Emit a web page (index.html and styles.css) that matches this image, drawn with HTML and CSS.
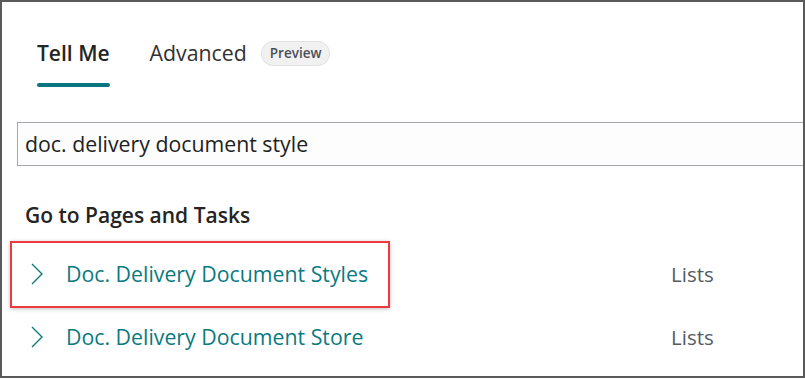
FILE: index.html
```html
<!DOCTYPE html>
<html lang="en">
<head>
    <meta charset="UTF-8">
    <meta name="viewport" content="width=device-width, initial-scale=1.0">
    <title>Tell Me</title>
    <link rel="stylesheet" href="styles.css">
</head>
<body>
    <div class="frame">
        <div class="tabs">
            <div class="tab active">Tell Me</div>
            <div class="tab">Advanced <span class="badge">Preview</span></div>
        </div>

        <div class="search">doc. delivery document style</div>

        <h2 class="section-title">Go to Pages and Tasks</h2>

        <ul class="results">
            <li class="result">
                <span class="highlight"></span>
                <svg class="chevron" width="14" height="22" viewBox="0 0 14 22">
                    <path d="M2 1 L12 11 L2 21" fill="none" stroke="#0b7a7f" stroke-width="1.4"/>
                </svg>
                <span class="result-name">Doc. Delivery Document Styles</span>
                <span class="result-type">Lists</span>
            </li>
            <li class="result">
                <svg class="chevron" width="14" height="22" viewBox="0 0 14 22">
                    <path d="M2 1 L12 11 L2 21" fill="none" stroke="#0b7a7f" stroke-width="1.4"/>
                </svg>
                <span class="result-name">Doc. Delivery Document Store</span>
                <span class="result-type">Lists</span>
            </li>
        </ul>
    </div>
</body>
</html>
```

FILE: styles.css
```css
* {
    margin: 0;
    padding: 0;
    box-sizing: border-box;
}

body {
    font-family: "Open Sans", "Noto Sans", sans-serif;
    background: #fff;
    color: #242424;
}

.frame {
    width: 805px;
    height: 378px;
    border: 2px solid #5a5a5a;
    overflow: hidden;
}

.tabs {
    display: flex;
    align-items: center;
    gap: 40px;
    margin: 37px 0 0 35px;
}

.tab {
    font-size: 21.3px;
    line-height: 28px;
    color: #323130;
    position: relative;
    display: flex;
    align-items: center;
    gap: 14px;
}

.tab.active {
    font-weight: 600;
    font-size: 21px;
    color: #242424;
}

.tab.active::after {
    content: "";
    position: absolute;
    left: 0;
    right: 0;
    bottom: -20px;
    height: 4px;
    border-radius: 2px;
    background: #087580;
}

.badge {
    font-size: 13.5px;
    font-weight: 600;
    line-height: 23px;
    padding: 0 8px;
    border-radius: 12px;
    background: #f1f1f2;
    border: 1px solid #e2e2e4;
    color: #4a4f57;
}

.search {
    margin: 55px 0 0 15px;
    width: 800px;
    height: 44px;
    border: 1px solid #a3a6ab;
    background: #fdfdfd;
    font-size: 21.3px;
    line-height: 42px;
    padding-left: 7px;
    color: #222;
}

.section-title {
    font-size: 21px;
    font-weight: 600;
    line-height: 26px;
    margin: 36px 0 0 23px;
    color: #242424;
}

.results {
    list-style: none;
    margin-top: 14px;
}

.result {
    position: relative;
    display: flex;
    align-items: center;
    height: 63px;
    padding-left: 28px;
}

.highlight {
    position: absolute;
    left: 8px;
    top: -1px;
    width: 380px;
    height: 67px;
    border: 2px solid #ec3a40;
    box-shadow: 0 1px 4px rgba(0, 0, 0, 0.25);
}

.chevron {
    flex-shrink: 0;
}

.result-name {
    margin-left: 22px;
    width: 605px;
    font-size: 21.3px;
    color: #0b7a7f;
}

.result-type {
    font-size: 20.5px;
    color: #555b63;
}
```
